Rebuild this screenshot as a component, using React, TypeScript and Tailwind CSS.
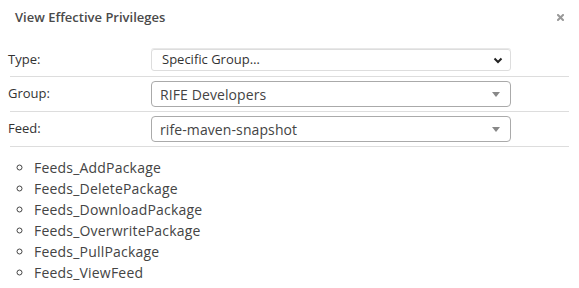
import React from "react";

const items = [
  "Feeds_AddPackage",
  "Feeds_DeletePackage",
  "Feeds_DownloadPackage",
  "Feeds_OverwritePackage",
  "Feeds_PullPackage",
  "Feeds_ViewFeed",
];

function Row({ label, children, first }: { label: string; children: React.ReactNode; first?: boolean }) {
  return (
    <div className={`ml-[10px] w-[559px] border-b border-[#dddddd] flex items-center ${first ? "pt-[5px] pb-[5px]" : "pt-[4px] pb-[4px]"}`}>
      <div className="-ml-[2px] w-[143px] shrink-0 text-[13px] text-[#333]">{label}</div>
      {children}
    </div>
  );
}

function Select2({ value }: { value: string }) {
  return (
    <div className="w-[360px] h-[26px] border border-[#aaaaaa] rounded-[4px] flex items-center justify-between pl-[8px] pr-[10px] text-[14px] text-[#444] tracking-[0.1px]">
      <span>{value}</span>
      <span className="w-0 h-0 border-t-[5px] border-t-[#888] border-x-[4px] border-x-transparent" />
    </div>
  );
}

export default function App() {
  return (
    <div className="w-[579px] h-[288px] bg-white text-[#333]" style={{ fontFamily: '"Open Sans", "Noto Sans", sans-serif' }}>
      <div className="h-[35px] flex items-center justify-between pl-[15px] pr-[15px]">
        <div className="text-[13px] font-semibold text-[#4a4a4a]">View Effective Privileges</div>
        <svg width="7" height="7" viewBox="0 0 7 7">
          <path d="M1 1 L6 6 M6 1 L1 6" stroke="#999" strokeWidth="2" strokeLinecap="square" />
        </svg>
      </div>
      <div className="mt-[9px]">
        <Row label="Type:" first>
          <div className="w-[360px] h-[22px] border border-[#dddddd] rounded-[3px] flex items-center justify-between pl-[10px] pr-[7px] text-[13px] text-[#333] shadow-[0_-1px_0_#e8e8e8]">
            <span>Specific Group…</span>
            <svg width="10" height="7" viewBox="0 0 10 7">
              <path d="M1.5 1.5 L5 5 L8.5 1.5" fill="none" stroke="#222" strokeWidth="2" />
            </svg>
          </div>
        </Row>
        <Row label="Group:">
          <Select2 value="RIFE Developers" />
        </Row>
        <Row label="Feed:">
          <Select2 value="rife-maven-snapshot" />
        </Row>
      </div>
      <ul className="list-[circle] pl-[34px] mt-[10px] text-[14px] leading-[21px] text-[#444] tracking-[0.2px]">
        {items.map((i) => (
          <li key={i}>{i}</li>
        ))}
      </ul>
    </div>
  );
}
